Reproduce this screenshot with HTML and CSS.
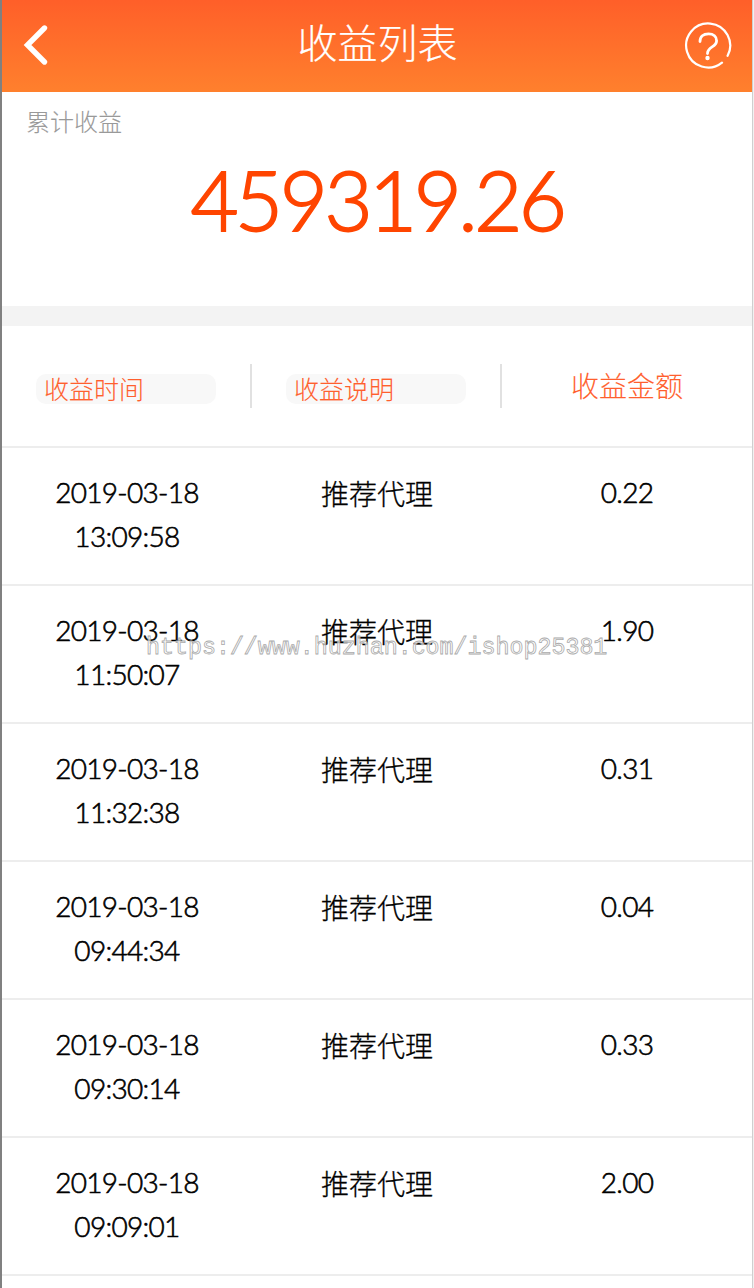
FILE: index.html
```html
<!DOCTYPE html>
<html lang="zh-CN">
<head>
  <meta charset="UTF-8">
  <title>收益列表</title>
  <link rel="stylesheet" href="styles.css">
</head>
<body>
  <div class="page">
    <header class="header">
      <svg class="back" width="26" height="42" viewBox="0 0 26 42"><path d="M21.5 4 L4.5 21 L21.5 38" fill="none" stroke="#fff" stroke-width="5.4" stroke-linecap="round"/></svg>
      <h1>收益列表</h1>
      <svg class="help" width="48" height="48" viewBox="0 0 48 48" fill="none" stroke="#fff" stroke-linecap="round">
        <path d="M38 40.600 A22 22 0 1 1 43.600 33.800" stroke-width="2.200"/>
        <path d="M16 19.500 C16 14.500 19.400 11.800 24.500 11.800 C29.600 11.800 32.600 14.800 32.600 18.700 C32.600 25.500 23.500 24.400 23.500 31.500" stroke-width="2.800"/>
        <circle cx="23.500" cy="36" r="2.200" fill="#fff" stroke="none"/>
      </svg>
    </header>
    <section class="total">
      <div class="total-label">累计收益</div>
      <div class="total-num">459319.26</div>
    </section>
    <div class="titles">
      <div class="title"><span class="pill">收益时间</span></div>
      <div class="title"><span class="pill">收益说明</span></div>
      <div class="title title-money">收益金额</div>
    </div>
    <div class="list">
      <div class="row"><div>2019-03-18<br>13:09:58</div><div class="desc">推荐代理</div><div>0.22</div></div>
      <div class="row"><div>2019-03-18<br>11:50:07</div><div class="desc">推荐代理</div><div>1.90</div></div>
      <div class="row"><div>2019-03-18<br>11:32:38</div><div class="desc">推荐代理</div><div>0.31</div></div>
      <div class="row"><div>2019-03-18<br>09:44:34</div><div class="desc">推荐代理</div><div>0.04</div></div>
      <div class="row"><div>2019-03-18<br>09:30:14</div><div class="desc">推荐代理</div><div>0.33</div></div>
      <div class="row"><div>2019-03-18<br>09:09:01</div><div class="desc">推荐代理</div><div>2.00</div></div>
    </div>
    <div class="watermark">https://www.huzhan.com/ishop25381</div>
  </div>
</body>
</html>
```
FILE: styles.css
```css
* { box-sizing: border-box; }
body { margin: 0; background: #f1f1f1; font-family: Lato, "Noto Sans CJK SC", sans-serif; font-weight: 300; }
.page {
  position: relative; width: 753px; height: 1288px; overflow: hidden; background: #fff;
  border-left: 2px solid #808080; border-right: 1px solid #cfcfcf;
}
.header {
  display: flex; justify-content: space-between; align-items: center;
  height: 92px; padding: 0 20px 2px 21px;
  background: linear-gradient(#ff5f29, #ff802d);
}
.header h1 {
  margin: 0 0 4px 22px; color: #fff; font-size: 40px; font-weight: 300; line-height: 56px;
  -webkit-text-stroke: 0.2px #fff;
}
.help { margin-top: 2px; }

.total { height: 234px; padding: 12px 24px; border-bottom: 20px solid #f3f3f3; }
.total-label { color: #999; font-size: 24px; line-height: 36px; -webkit-text-stroke: 0.1px #999; }
.total-num {
  margin-top: 12px; text-align: center; color: #ff4500;
  font-size: 83px; font-weight: 300; line-height: 94px; letter-spacing: -3.5px;
  -webkit-text-stroke: 1.8px #ff4500;
}

.titles { display: flex; height: 122px; border-bottom: 2px solid #ededed; color: #ff5f2e; -webkit-text-stroke: 0.1px #ff5f2e; }
.title { width: 250px; height: 44px; margin-top: 38px; padding: 10px 34px; border-right: 2px solid #e1e1e1; }
.title:last-child { border-right: none; }
.pill {
  display: block; width: 180px; height: 30px; padding-left: 8px;
  border-radius: 10px; background: #f8f8f8; font-size: 25px; line-height: 30px;
}
.title-money { padding: 0; text-align: center; font-size: 28px; line-height: 44px; }

.row {
  display: flex; height: 138px; padding-top: 22px; border-bottom: 2px solid #ededed;
  color: #000; font-size: 28px; font-weight: 300; line-height: 44px; letter-spacing: -0.7px; text-align: center;
  -webkit-text-stroke: 0.6px #000;
}
.row > div { width: 250px; }
.row .desc { letter-spacing: 0; padding-top: 2px; -webkit-text-stroke: 0.3px #000; }

.watermark {
  position: absolute; left: 144px; top: 632px;
  color: rgba(255, 255, 255, 0.7); -webkit-text-stroke: 0.8px #aaa;
  font-family: "Liberation Mono", monospace; font-size: 23.3px; font-weight: 400; line-height: 32px;
}
```
